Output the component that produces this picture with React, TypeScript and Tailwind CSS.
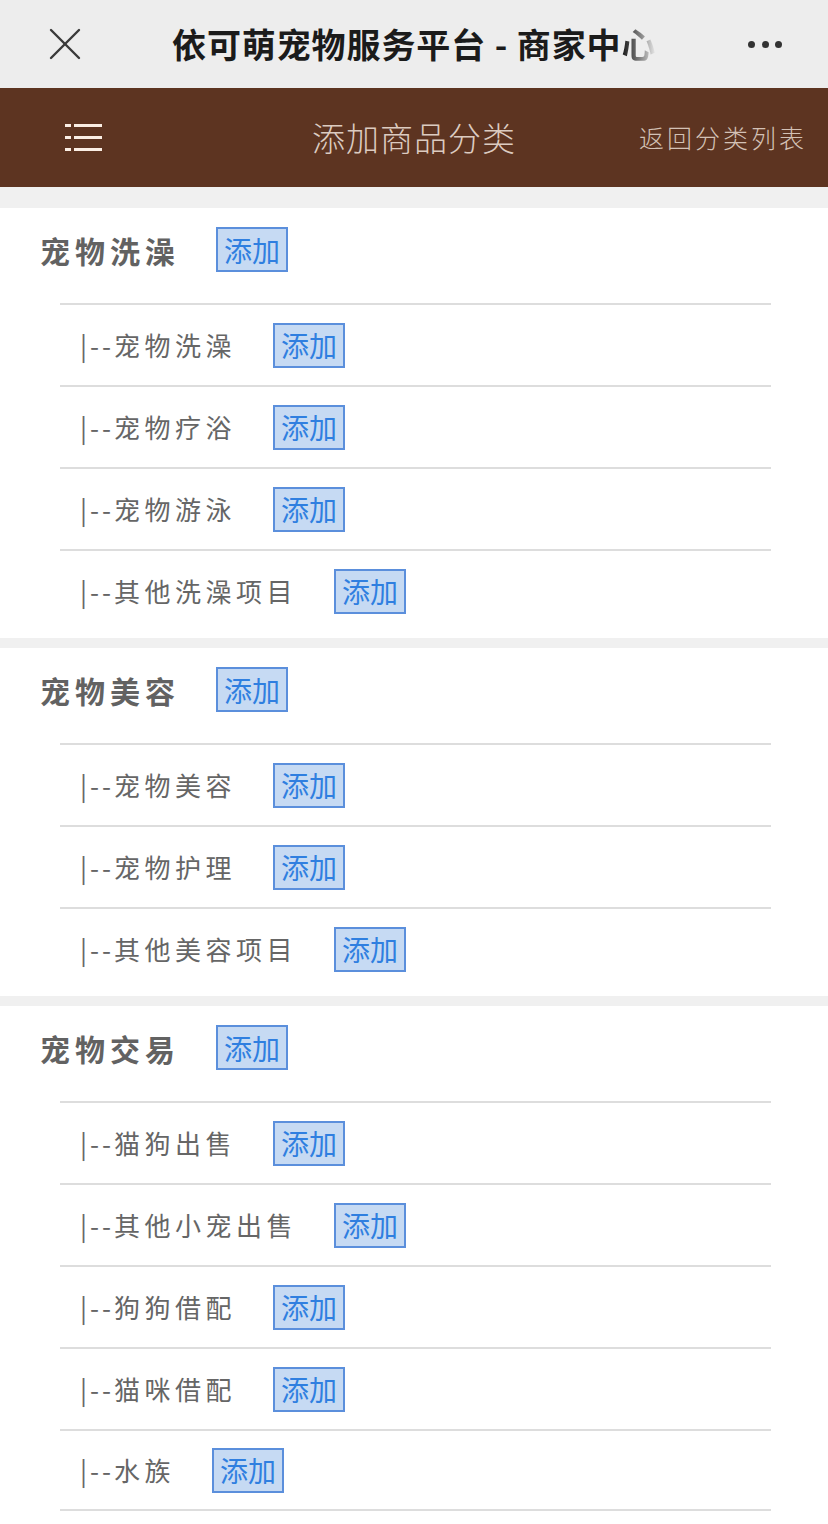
import React from "react";

type Section = { title: string; items: string[] };

const sections: Section[] = [
  { title: "宠物洗澡", items: ["宠物洗澡", "宠物疗浴", "宠物游泳", "其他洗澡项目"] },
  { title: "宠物美容", items: ["宠物美容", "宠物护理", "其他美容项目"] },
  { title: "宠物交易", items: ["猫狗出售", "其他小宠出售", "狗狗借配", "猫咪借配", "水族"] },
];

function AddButton() {
  return (
    <button className="flex h-[45px] w-[72px] shrink-0 items-center justify-center border-2 border-[#5b8fdc] bg-[#c6daf3] text-[28px] leading-none text-[#2f7fe0]">
      添加
    </button>
  );
}

export default function App() {
  return (
    <div className="h-[1524px] w-[828px] overflow-hidden bg-white font-['Noto_Sans_CJK_SC','Noto_Sans',sans-serif]">
      {/* WeChat top bar */}
      <div className="flex h-[88px] items-center bg-[#ededed]">
        <div className="flex w-[172px] shrink-0 items-center pl-[49px]">
          <svg width="32" height="32" viewBox="0 0 32 32" fill="none" stroke="#3a3a3a" strokeWidth="2.4" strokeLinecap="round">
            <path d="M2 2 L30 30" />
            <path d="M30 2 L2 30" />
          </svg>
        </div>
        <div className="flex-1 whitespace-nowrap text-[34px] font-bold leading-none tracking-[0.9px] text-[#1b1b1b]">
          依可萌宠物服务平台 - 商家中
          <span className="bg-gradient-to-r from-[#1b1b1b] to-[#ededed] bg-clip-text text-transparent">心</span>
        </div>
        <div className="flex shrink-0 items-center gap-[6.5px] pr-[46px]">
          <span className="h-[7px] w-[7px] rounded-full bg-[#333]" />
          <span className="h-[7px] w-[7px] rounded-full bg-[#333]" />
          <span className="h-[7px] w-[7px] rounded-full bg-[#333]" />
        </div>
      </div>

      {/* Brown header */}
      <div className="grid h-[99px] grid-cols-[1fr_auto_1fr] items-center bg-[#5d3421]">
        <div className="flex items-center pl-[65px]">
          <div className="flex flex-col gap-[9px]">
            {[0, 1, 2].map((i) => (
              <div key={i} className="flex gap-[3px]">
                <span className="h-[3px] w-[6px] bg-[#fbeee4]" />
                <span className="h-[3px] w-[28px] bg-[#fbeee4]" />
              </div>
            ))}
          </div>
        </div>
        <div className="whitespace-nowrap text-[33px] font-extralight tracking-[1px] text-[#dccbc0]">添加商品分类</div>
        <div className="flex justify-end whitespace-nowrap pr-[21px] text-[25px] font-extralight tracking-[3px] text-[#d3c1b5]">
          返回分类列表
        </div>
      </div>

      <div className="h-[21px] bg-[#f0f0f0]" />

      {sections.map((s, si) => {
        const last = si === sections.length - 1;
        return (
          <React.Fragment key={s.title}>
            <div className={"bg-white " + (last ? "pb-0" : "pb-[7px]")}>
              <div className="flex h-[83px] items-center gap-[36px] pl-[40px]">
                <span className="text-[30px] font-bold leading-none tracking-[5px] text-[#626262]">{s.title}</span>
                <AddButton />
              </div>
              <div className="ml-[60px] mr-[57px] mt-[12px]">
                {s.items.map((it, ii) => (
                  <div
                    key={it}
                    className={
                      "flex h-[82px] items-center gap-[37px] border-t-2 border-[#dddddd] pl-[20px]" +
                      (last && ii === s.items.length - 1 ? " border-b-2" : "")
                    }
                  >
                    <span className="whitespace-nowrap text-[26px] leading-none text-[#666666]">
                      <span className="tracking-[3px]">|--</span>
                      <span className="tracking-[4.5px]">{it}</span>
                    </span>
                    <AddButton />
                  </div>
                ))}
              </div>
            </div>
            {!last && <div className="h-[10px] bg-[#f0f0f0]" />}
          </React.Fragment>
        );
      })}
    </div>
  );
}
